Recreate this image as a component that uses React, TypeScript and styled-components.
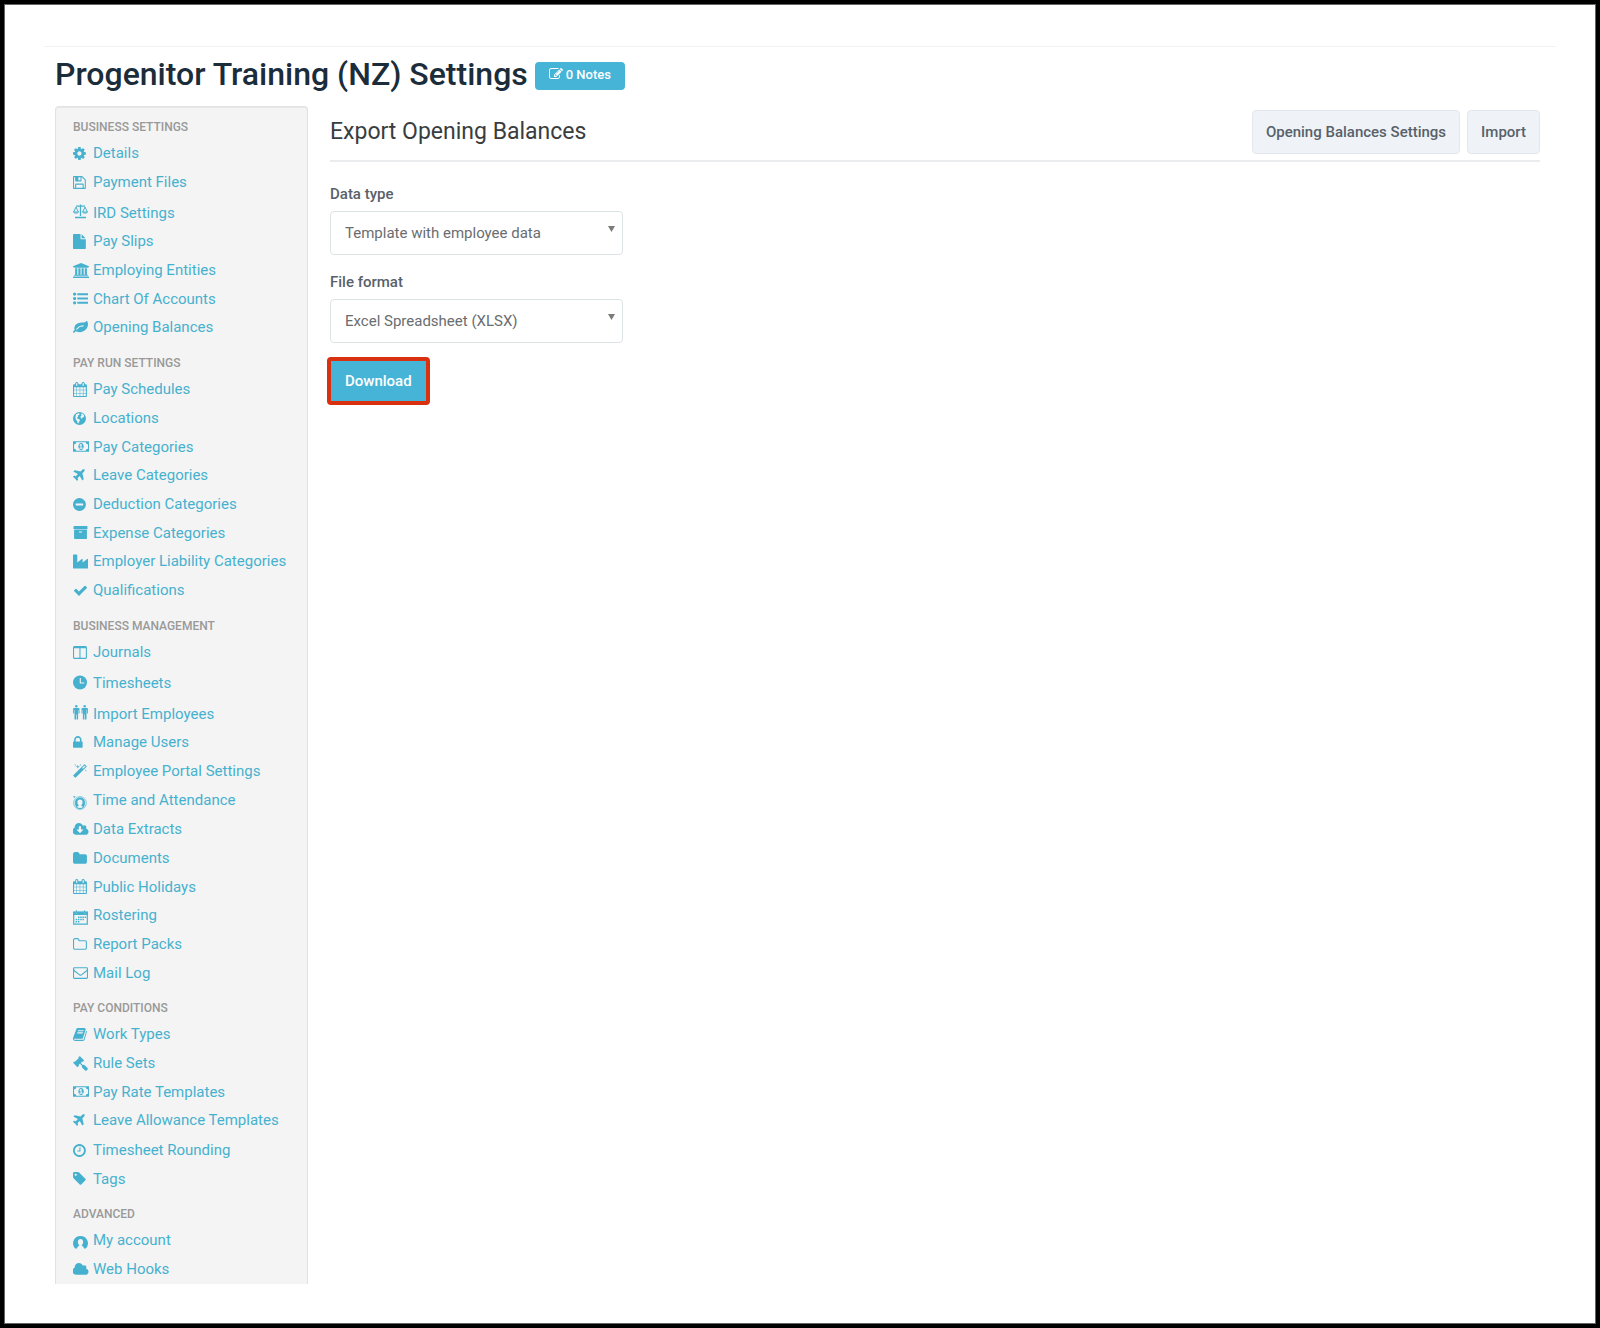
import React from 'react';
import styled, { createGlobalStyle, css } from 'styled-components';

const GlobalStyle = createGlobalStyle`
  *, *::before, *::after { box-sizing: border-box; }
  body {
    margin: 0;
    background: #fff;
    color: #58616a;
    font-family: Roboto, "Liberation Sans", sans-serif;
    font-size: 15px;
    line-height: 20px;
  }
`;

/* ---------- icons ---------- */

type Glyph = { box: string; art: React.ReactNode; low?: boolean; high?: boolean };

const solid = (box: string, d: string): Glyph => ({ box, art: <path d={d} /> });

const CALENDAR =
  'M192 1664h288v-288h-288v288zm352 0h320v-288h-320v288zm-352-352h288v-320h-288v320zm352 0h320v-320h-320v320zm-352-384h288v-288h-288v288zm736 736h320v-288h-320v288zm-384-736h320v-288h-320v288zm768 736h288v-288h-288v288zm-384-352h320v-320h-320v320zm-352-864v-288q0-13-9.5-22.5t-22.5-9.5h-64q-13 0-22.5 9.5t-9.5 22.5v288q0 13 9.5 22.5t22.5 9.5h64q13 0 22.5-9.5t9.5-22.5zm736 864h288v-320h-288v320zm-384-384h320v-288h-320v288zm384 0h288v-288h-288v288zm32-480v-288q0-13-9.5-22.5t-22.5-9.5h-64q-13 0-22.5 9.5t-9.5 22.5v288q0 13 9.5 22.5t22.5 9.5h64q13 0 22.5-9.5t9.5-22.5zm384-64v1280q0 52-38 90t-90 38h-1408q-52 0-90-38t-38-90v-1280q0-52 38-90t90-38h128v-96q0-66 47-113t113-47h64q66 0 113 47t47 113v96h384v-96q0-66 47-113t113-47h64q66 0 113 47t47 113v96h128q52 0 90 38t38 90z';

const glyphs = {
  cog: solid('128 0 1536 1792', 'M1152 896q0-106-75-181t-181-75-181 75-75 181 75 181 181 75 181-75 75-181zm512-109v222q0 12-8 23t-20 13l-185 28q-19 54-39 91 35 50 107 138 10 12 10 25t-9 23q-27 37-99 108t-94 71q-12 0-26-9l-138-108q-44 23-91 38-16 136-29 186-7 28-36 28h-222q-14 0-24.5-8.5t-11.5-21.5l-28-184q-49-16-90-37l-141 107q-10 9-25 9-14 0-25-11-126-114-165-168-7-10-7-23 0-12 8-23 15-21 51-66.5t54-70.5q-27-50-41-99l-183-27q-13-2-21-12.5t-8-23.5v-222q0-12 8-23t19-13l186-28q14-46 39-92-40-57-107-138-10-12-10-24 0-10 9-23 26-36 98.5-107.5t94.5-71.5q13 0 26 10l138 107q44-23 91-38 16-136 29-186 7-28 36-28h222q14 0 24.5 8.5t11.5 21.5l28 184q49 16 90 37l142-107q9-9 24-9 13 0 25 10 129 119 165 170 7 8 7 22 0 12-8 23-15 21-51 66.5t-54 70.5q26 50 41 98l183 28q13 2 21 12.5t8 23.5z'),
  save: solid('128 0 1536 1792', 'M512 1536h768v-384h-768v384zm896 0h128v-896q0-14-10-38.5t-20-34.5l-281-281q-10-10-34-20t-39-10v416q0 40-28 68t-68 28h-576q-40 0-68-28t-28-68v-416h-128v1280h128v-416q0-40 28-68t68-28h832q40 0 68 28t28 68v416zm-384-928v-320q0-13-9.5-22.5t-22.5-9.5h-192q-13 0-22.5 9.5t-9.5 22.5v320q0 13 9.5 22.5t22.5 9.5h192q13 0 22.5-9.5t9.5-22.5zm640 32v928q0 40-28 68t-68 28h-1344q-40 0-68-28t-28-68v-1344q0-40 28-68t68-28h928q40 0 88 20t76 48l280 280q28 28 48 76t20 88z'),
  scales: {
    box: '0 0 15 15',
    high: true,
    art: (
      <g fill="none" stroke="currentColor" strokeWidth="1">
        <path d="M7.5 .4V12M3 2.2h9M2 13.5h11" strokeWidth="1.3" />
        <path d="M.7 8 3 3l2.300 5M9.700 8 12 3l2.300 5" />
        <path d="M.4 8h5.200c-.3 1.500-4.900 1.500-5.200 0ZM9.400 8h5.200c-.3 1.500-4.900 1.500-5.200 0Z" />
      </g>
    ),
  },
  file: solid('128 0 1536 1792', 'M1152 512v-472q22 14 36 28l408 408q14 14 28 36h-472zm-128 32q0 40 28 68t68 28h544v1056q0 40-28 68t-68 28h-1344q-40 0-68-28t-28-68v-1600q0-40 28-68t68-28h800v544z'),
  bank: solid('0 0 1920 1792', 'M960 0l960 384v128h-128q0 26-20.5 45t-48.5 19h-1526q-28 0-48.5-19t-20.5-45h-128v-128zm-704 640h256v768h128v-768h256v768h128v-768h256v768h128v-768h256v768h59q28 0 48.5 19t20.5 45v64h-1664v-64q0-26 20.5-45t48.5-19h59v-768zm1595 960q28 0 48.5 19t20.5 45v128h-1920v-128q0-26 20.5-45t48.5-19h1782z'),
  list: solid('0 0 1792 1792', 'M384 1408q0 80-56 136t-136 56-136-56-56-136 56-136 136-56 136 56 56 136zm0-512q0 80-56 136t-136 56-136-56-56-136 56-136 136-56 136 56 56 136zm1408 416v192q0 13-9.5 22.5t-22.5 9.5h-1216q-13 0-22.5-9.5t-9.5-22.5v-192q0-13 9.5-22.5t22.5-9.5h1216q13 0 22.5 9.5t9.5 22.5zm-1408-928q0 80-56 136t-136 56-136-56-56-136 56-136 136-56 136 56 56 136zm1408 416v192q0 13-9.5 22.5t-22.5 9.5h-1216q-13 0-22.5-9.5t-9.5-22.5v-192q0-13 9.5-22.5t22.5-9.5h1216q13 0 22.5 9.5t9.5 22.5zm0-512v192q0 13-9.5 22.5t-22.5 9.5h-1216q-13 0-22.5-9.5t-9.5-22.5v-192q0-13 9.5-22.5t22.5-9.5h1216q13 0 22.5 9.5t9.5 22.5z'),
  leaf: solid('0 0 1792 1792', 'M1280 704q0-26-19-45t-45-19q-172 0-318 49.5t-259.5 134-235.5 219.5q-19 21-19 45 0 26 19 45t45 19q24 0 45-19 27-24 74-71t67-66q137-124 268.5-176t313.5-52q26 0 45-19t19-45zm512-198q0 95-20 193-46 224-184.5 383t-357.5 268q-214 108-438 108-148 0-286-47-15-5-88-42t-96-37q-16 0-39.5 32t-45 70-52.5 70-60 32q-43 0-63.5-17.5t-45.5-59.5q-2-4-6-11t-5.5-10-3-9.5-1.5-13.5q0-35 31-73.5t68-65.5 68-56 31-48q0-4-14-38t-16-44q-9-51-9-104 0-115 43.5-220t119-184.5 170.5-139 204-95.5q55-18 145-25.5t179.5-9 178.5-6 163.5-24 113.5-56.5l29.5-29.5 29.5-28 27-20 36.5-16 43.5-4.5q39 0 70.5 46t47.5 112 24 124 8 96z'),
  calendar: solid('64 0 1664 1792', CALENDAR),
  globe: {
    box: '0 0 13 15',
    art: (
      <>
        <circle cx="6.500" cy="7.500" r="6.500" />
        <g fill="#f4f4f4">
          <path d="M3 3.200 5.500 2.200l1.200.6-.6 1.300-1.300.5.3 1.100-1.300 1.200.9.9 1.700.4.5 1.300-1 1.400-.3 1.700-1-.6-.5-2.100-1.300-1.300-.4-2.100Z" />
          <path d="M8.300 2.300 10 3.100l1 1.500-.3 1.600-1.200.4-.6 1.100-1.200-1-.2-1.500 1-.8Z" />
        </g>
      </>
    ),
  },
  money: solid('0 0 1920 1792', 'M768 1152h384v-96h-128v-448h-114l-148 137 77 80q42-37 55-57h2v288h-128v96zm512-256q0 70-21 142t-59.5 134-101.5 101-138 39-138-39-101.5-101-59.5-134-21-142 21-142 59.5-134 101.5-101 138-39 138 39 101.5 101 59.5 134 21 142zm512 256v-512q-106 0-181-75t-75-181h-1152q0 106-75 181t-181 75v512q106 0 181 75t75 181h1152q0-106 75-181t181-75zm128-832v1152q0 26-19 45t-45 19h-1792q-26 0-45-19t-19-45v-1152q0-26 19-45t45-19h1792q26 0 45 19t19 45z'),
  plane: solid('192 0 1408 1792', 'M1568 160q44 52 12 148t-108 172l-161 161 160 696q5 19-12 33l-128 96q-7 6-19 6-4 0-7-1-15-3-21-16l-279-508-259 259 53 194q5 17-8 31l-96 96q-9 9-23 9h-2q-15-2-24-13l-189-252-252-189q-11-7-13-23-1-13 9-25l96-97q9-9 23-9 6 0 8 1l194 53 259-259-508-279q-14-8-17-24-2-16 9-27l128-128q14-13 30-8l665 159 160-160q76-76 172-108t148 12z'),
  minus: solid('128 0 1536 1792', 'M1344 960v-128q0-26-19-45t-45-19h-768q-26 0-45 19t-19 45v128q0 26 19 45t45 19h768q26 0 45-19t19-45zm320-64q0 209-103 385.5t-279.5 279.5-385.5 103-385.5-103-279.5-279.5-103-385.5 103-385.5 279.5-279.5 385.5-103 385.5 103 279.5 279.5 103 385.5z'),
  archive: solid('0 0 1792 1792', 'M1088 832q0-26-19-45t-45-19h-256q-26 0-45 19t-19 45 19 45 45 19h256q26 0 45-19t19-45zm576-192v960q0 26-19 45t-45 19h-1408q-26 0-45-19t-19-45v-960q0-26 19-45t45-19h1408q26 0 45 19t19 45zm64-448v256q0 26-19 45t-45 19h-1536q-26 0-45-19t-19-45v-256q0-26 19-45t45-19h1536q26 0 45 19t19 45z'),
  industry: solid('0 0 1792 1792', 'M448 64q26 0 45 19t19 45v891l536-429q17-14 40-14 26 0 45 19t19 45v379l536-429q17-14 40-14 26 0 45 19t19 45v1024q0 26-19 45t-45 19h-1664q-26 0-45-19t-19-45v-1536q0-26 19-45t45-19h384z'),
  check: solid('0 0 1792 1792', 'M1671 566q0 40-28 68l-724 724-136 136q-28 28-68 28t-68-28l-136-136-362-362q-28-28-28-68t28-68l136-136q28-28 68-28t68 28l294 295 656-657q28-28 68-28t68 28l136 136q28 28 28 68z'),
  columns: solid('64 0 1664 1792', 'M224 1536h608v-1152h-640v1120q0 13 9.5 22.5t22.500 9.500zm1376-32v-1120h-640v1152h608q13 0 22.500-9.500t9.500-22.500zm128-1216v1216q0 66-47 113t-113 47h-1344q-66 0-113-47t-47-113v-1216q0-66 47-113t113-47h1344q66 0 113 47t47 113z'),
  clock: {
    box: '0 0 14 15',
    high: true,
    art: (
      <>
        <circle cx="7" cy="7.500" r="7" />
        <path d="M7.300 3v5h4" fill="none" stroke="#f4f4f4" strokeWidth="1.100" />
      </>
    ),
  },
  people: {
    box: '0 0 15 15',
    high: true,
    art: (
      <>
        <circle cx="3.300" cy="1.300" r="1.200" />
        <path d="M.9 3h4.800q.8 0 .8.900V8.500h-1V5h-.4V14.600H3.600V9.500H3V14.600H1.500V5h-.4V8.500H.1V3.900Q.1 3 .9 3Z" />
        <circle cx="11.700" cy="1.300" r="1.200" />
        <path d="M9.300 3h4.800q.8 0 .8.900V8.500h-1V5h-.4V14.600H12V9.500h-.6V14.600H9.900V5h-.4V8.500h-1V3.900Q8.500 3 9.300 3Z" />
      </>
    ),
  },
  lock: solid('320 0 1152 1792', 'M640 768h512v-192q0-106-75-181t-181-75-181 75-75 181v192zm832 96v576q0 40-28 68t-68 28h-960q-40 0-68-28t-28-68v-576q0-40 28-68t68-28h32v-192q0-184 132-316t316-132 316 132 132 316v192h32q40 0 68 28t28 68z'),
  wand: solid('64 0 1664 1792', 'M1254 581l293-293-107-107-293 293zm447-293q0 27-18 45l-1286 1286q-18 18-45 18t-45-18l-198-198q-18-18-18-45t18-45l1286-1286q18-18 45-18t45 18l198 198q18 18 18 45zm-1351-190l98 30-98 30-30 98-30-98-98-30 98-30 30-98zm350 162l196 60-196 60-60 196-60-196-196-60 196-60 60-196zm930 478l98 30-98 30-30 98-30-98-98-30 98-30 30-98zm-640-640l98 30-98 30-30 98-30-98-98-30 98-30 30-98z'),
  attendance: {
    box: '0 0 14 15',
    low: true,
    art: (
      <>
        <circle cx="7" cy="8" r="6.300" fill="none" stroke="currentColor" strokeWidth=".9" opacity=".8" />
        <path
          fillRule="evenodd"
          d="M7 2.500c3 0 5 2.300 5 5.300 0 2-.6 3.600-1.500 4.700Q9 14 7 14t-3.500-1.500C2.600 11.400 2 9.800 2 7.800c0-3 2-5.300 5-5.300ZM7 4.400C5.300 4.400 4.400 5.700 4.400 7.300c0 1.200.5 2.200 1.200 2.800v.9l-1.700.8q1.300 1.200 3.100 1.200t3.100-1.200L8.400 11v-.9c.7-.6 1.200-1.600 1.200-2.800 0-1.600-.9-2.900-2.600-2.900Z"
        />
        <path d="M0 1.200h2.600L1.300 3.200Z" />
      </>
    ),
  },
  cloudDown: solid('0 0 1920 1792', 'M1216 928q0-14-9-23t-23-9h-224v-352q0-13-9.5-22.5t-22.5-9.5h-192q-13 0-22.5 9.5t-9.5 22.5v352h-224q-13 0-22.5 9.5t-9.5 22.5q0 14 9 23l352 352q9 9 23 9t23-9l351-351q10-12 10-24zm640 224q0 159-112.5 271.5t-271.5 112.5h-1088q-185 0-316.5-131.5t-131.500-316.500q0-130 70-240t188-165q-2-30-2-43 0-212 150-362t362-150q156 0 285.500 87t188.500 231q71-62 166-62 106 0 181 75t75 181q0 76-41 138 130 31 213.500 135.500t83.500 238.500z'),
  folder: solid('64 0 1664 1792', 'M1728 608v704q0 92-66 158t-158 66h-1216q-92 0-158-66t-66-158v-960q0-92 66-158t158-66h320q92 0 158 66t66 158v32h672q92 0 158 66t66 158z'),
  roster: {
    box: '0 0 15 15',
    low: true,
    art: (
      <>
        <path d="M.7 2.200h13.600v12H.7Z" fill="none" stroke="currentColor" strokeWidth="1.200" />
        <path d="M.2 1.700h2.500v1.500h1.500V1.700h6.600v1.500h1.500V1.700h2.500V5H.2ZM2.900.3h1v2.400h-1ZM11.100.3h1v2.400h-1Z" />
        <path d="M5 6.500h1.500V8H5ZM7.200 6.500h1.500V8H7.200ZM9.400 6.500h1.500V8H9.400ZM11.600 6.500h1.500V8h-1.500ZM2.600 8.800h1.500v1.500H2.600ZM4.900 8.800h1.500v1.500H4.900ZM7.200 8.800h1.500v1.500H7.200ZM9.400 8.800h1.500v1.500H9.400ZM2.600 11.100h1.500v1.500H2.600ZM4.900 11.100h1.500v1.500H4.900Z" />
      </>
    ),
  } as Glyph,
  folderOpen: solid('64 0 1664 1792', 'M1600 1312v-704q0-40-28-68t-68-28h-704q-40 0-68-28t-28-68v-64q0-40-28-68t-68-28h-320q-40 0-68 28t-28 68v960q0 40 28 68t68 28h1216q40 0 68-28t28-68zm128-704v704q0 92-66 158t-158 66h-1216q-92 0-158-66t-66-158v-960q0-92 66-158t158-66h320q92 0 158 66t66 158v32h672q92 0 158 66t66 158z'),
  mail: solid('0 0 1792 1792', 'M1664 1504v-768q-32 36-69 66-268 206-426 338-51 43-83 67t-86.5 48.5-102.5 24.5h-2q-48 0-102.500-24.500t-86.500-48.500-83-67q-158-132-426-338-37-30-69-66v768q0 13 9.500 22.500t22.500 9.500h1472q13 0 22.500-9.500t9.500-22.500zm0-1051v-24.500l-.5-13-3-12.500-5.500-9-9-7.500-14-2.500h-1472q-13 0-22.500 9.500t-9.500 22.500q0 168 147 284 193 152 401 317 6 5 35 29.500t46 37.500 44.500 31.500 50.500 27.500 43 9h2q20 0 43-9t50.500-27.500 44.500-31.500 46-37.500 35-29.500q208-165 401-317 54-43 100.500-115.500t46.500-131.500zm128-37v1088q0 66-47 113t-113 47h-1472q-66 0-113-47t-47-113v-1088q0-66 47-113t113-47h1472q66 0 113 47t47 113z'),
  book: solid('64 0 1664 1792', 'M1703 478q40 57 18 129l-275 906q-19 64-76.500 107.500t-122.500 43.500h-923q-77 0-148.500-53.500t-99.500-131.500q-24-67-2-127 0-4 3-27t4-37q1-8-3-21.500t-3-19.500q2-11 8-21t16.500-23.500 16.500-23.500q23-38 45-91.500t30-91.500q3-10 .5-30t-.5-28q3-11 17-28t17-23q21-36 42-92t25-90q1-9-2.500-32t.5-28q4-13 22-30.500t22-22.500q19-26 42.500-84.500t27.500-96.500q1-8-3-25.500t-2-26.500q2-8 9-18t18-23 17-21q8-12 16.500-30.500t15-35 16-36 19.500-32 26.500-23.500 36-11.500 47.500 5.500l-1 3q38-9 51-9h761q74 0 114 56t18 130l-274 906q-36 119-71.500 153.500t-128.500 34.500h-869q-27 0-38 15-11 16-1 43 24 70 144 70h923q29 0 56-15.500t35-41.500l300-987q7-22 5-57 38 15 59 43zm-1064 2q-4 13 2 22.500t20 9.500h608q13 0 25.500-9.500t16.500-22.500l21-64q4-13-2-22.500t-20-9.500h-608q-13 0-25.500 9.500t-16.500 22.500zm-83 256q-4 13 2 22.500t20 9.500h608q13 0 25.500-9.500t16.500-22.500l21-64q4-13-2-22.500t-20-9.500h-608q-13 0-25.500 9.500t-16.500 22.500z'),
  gavel: solid('0 0 1792 1792', 'M1771 1536q0 53-37 90l-107 108q-39 37-91 37-53 0-90-37l-363-364q-38-36-38-90 0-53 43-96l-256-256-126 126q-14 14-34 14t-34-14q2 2 12.500 12t12.500 13 10 11.500 10 13.500 6 13.500 5.500 16.500 1.500 18q0 38-28 68-3 3-16.500 18t-19 20.500-18.500 16.500-22 15.500-22 9-26 4.500q-40 0-68-28l-408-408q-28-28-28-68 0-13 4.500-26t9-22 15.500-22 16.500-18.500 20.500-19 18-16.500q30-28 68-28 10 0 18 1.500t16.500 5.500 13.500 6 13.500 10 11.500 10 13 12.500 12 12.500q-14-14-14-34t14-34l348-348q14-14 34-14t34 14q-2-2-12.500-12t-12.500-13-10-11.500-10-13.500-6-13.500-5.500-16.500-1.500-18q0-38 28-68 3-3 16.500-18t19-20.500 18.500-16.500 22-15.500 22-9 26-4.500q40 0 68 28l408 408q28 28 28 68 0 13-4.500 26t-9 22-15.500 22-16.500 18.500-20.500 19-18 16.500q-30 28-68 28-10 0-18-1.500t-16.500-5.500-13.500-6-13.500-10-11.500-10-13-12.500-12-12.500q14 14 14 34t-14 34l-126 126 256 256q43-43 96-43 52 0 91 37l363 363q37 39 37 91z'),
  clockOutline: solid('128 0 1536 1792', 'M1024 544v448q0 14-9 23t-23 9h-320q-14 0-23-9t-9-23v-64q0-14 9-23t23-9h224v-352q0-14 9-23t23-9h64q14 0 23 9t9 23zm416 352q0-148-73-273t-198-198-273-73-273 73-198 198-73 273 73 273 198 198 273 73 273-73 198-198 73-273zm224 0q0 209-103 385.5t-279.5 279.5-385.5 103-385.5-103-279.5-279.5-103-385.5 103-385.5 279.5-279.5 385.5-103 385.5 103 279.5 279.5 103 385.5z'),
  tag: solid('128 0 1536 1792', 'M576 448q0-53-37.5-90.5t-90.5-37.5-90.5 37.5-37.5 90.5 37.5 90.5 90.5 37.5 90.5-37.5 37.5-90.5zm1067 576q0 53-37 90l-491 492q-39 37-91 37-53 0-90-37l-715-716q-38-37-64.5-101t-26.5-117v-416q0-52 38-90t90-38h416q53 0 117 26.5t102 64.5l715 714q37 39 37 91z'),
  account: {
    box: '0 0 15 15',
    low: true,
    art: (
      <path
        fillRule="evenodd"
        d="M7.500.9a7.400 7.400 0 0 1 5.800 12q-.5.600-1.300.6h-1.100q0-1.700-1.600-2.400l-.5-.3v-.9c.8-.6 1.300-1.500 1.300-2.700 0-2-1-3.200-2.600-3.200S4.900 5.200 4.900 7.200c0 1.200.5 2.100 1.300 2.700v.9l-.5.3q-1.600.7-1.600 2.400H3q-.8 0-1.300-.6A7.400 7.400 0 0 1 7.500.9Z"
      />
    ),
  } as Glyph,
  cloud: solid('0 0 1920 1792', 'M1856 1152q0 159-112.500 271.500t-271.500 112.500h-1088q-185 0-316.500-131.500t-131.500-316.500q0-130 70-240t188-165q-2-30-2-43 0-212 150-362t362-150q156 0 285.500 87t188.500 231q71-62 166-62 106 0 181 75t75 181q0 76-41 138 130 31 213.500 135.500t83.500 238.500z'),
  edit: solid('0 0 1792 1792', 'M888 1184l116-116-152-152-116 116v56h96v96h56zm440-720q-16-16-33 1l-350 350q-17 17-1 33t33-1l350-350q17-17 1-33zm80 594v190q0 119-84.5 203.5t-203.5 84.5h-832q-119 0-203.500-84.500t-84.500-203.500v-832q0-119 84.500-203.500t203.500-84.500h832q63 0 117 25 15 7 18 23 3 17-9 29l-49 49q-14 14-32 8-23-6-45-6h-832q-66 0-113 47t-47 113v832q0 66 47 113t113 47h832q66 0 113-47t47-113v-126q0-13 9-22l64-64q15-15 35-7t20 29zm-96-738l288 288-672 672h-288v-288zm444 132l-92 92-288-288 92-92q28-28 68-28t68 28l152 152q28 28 28 68t-28 68z'),
} satisfies Record<string, Glyph>;

type IconName = keyof typeof glyphs;

const IconSvg = styled.svg`
  display: block;
  height: 15px;
  fill: currentColor;
`;

const SmallIconSvg = styled(IconSvg)`
  height: 14px;
`;

/* ---------- page ---------- */

const Frame = styled.div`
  min-height: 100vh;
  padding: 42px 40px 32px;
  border: 4px solid #000;
  box-shadow: inset 0 0 0 1px #666;
`;

const Page = styled.div`
  padding: 0 16px 0 11px;
  border-top: 1px solid #f2f2f3;
`;

const Header = styled.header`
  display: flex;
  align-items: center;
  gap: 7px;
  height: 59px;
  padding-bottom: 4px;
`;

const PageTitle = styled.h1`
  margin: 0;
  color: #1b2c3a;
  font-size: 32px;
  font-weight: 500;
  line-height: 55px;
`;

const buttonBase = css`
  border: 1px solid transparent;
  border-radius: 4px;
  font-family: inherit;
  font-weight: 500;
  cursor: pointer;
`;

const NotesButton = styled.button`
  ${buttonBase}
  display: flex;
  align-items: center;
  gap: 3px;
  height: 28px;
  margin-top: 2px;
  padding: 0 13px 3px;
  background: #46b4d7;
  color: #fff;
  font-size: 13px;
`;

const Columns = styled.div`
  display: flex;
  align-items: flex-start;
  gap: 22px;
`;

const Sidebar = styled.nav`
  flex: 0 0 253px;
  padding: 9px 16px 0 17px;
  border: 1px solid #e2e2e3;
  border-bottom: 0;
  border-radius: 4px 4px 0 0;
  background: #f4f4f4;
  box-shadow: inset 0 1px 1px #e6e6e6;
`;

const Group = styled.section`
  & + & {
    margin-top: 10px;
  }
`;

const GroupTitle = styled.h2`
  margin: 0;
  padding-bottom: 1px;
  color: #999;
  font-size: 12px;
  font-weight: 500;
  line-height: 22px;
  text-transform: uppercase;
`;

const Links = styled.ul`
  margin: 0;
  padding: 0;
  list-style: none;
`;

const LinkItem = styled.li<{ $lead: number }>`
  padding-top: ${({ $lead }) => $lead}px;
  line-height: 29px;

  &:nth-child(3n) {
    line-height: 28px;
  }
`;

const NavLink = styled.a`
  display: flex;
  align-items: center;
  color: #46b1cf;
  text-decoration: none;
  white-space: nowrap;

  &:hover {
    text-decoration: underline;
  }
`;

const IconSlot = styled.span<{ $low?: boolean; $high?: boolean }>`
  flex: 0 0 20px;
  padding-top: ${({ $low }) => ($low ? '4px' : '0')};
  padding-bottom: ${({ $low, $high }) => ($high ? '3px' : $low ? '0' : '1px')};
`;

const Main = styled.main`
  flex: 1;
  min-width: 0;
  padding-top: 4px;
`;

const Toolbar = styled.div`
  display: flex;
  align-items: center;
  justify-content: space-between;
  padding-bottom: 6px;
  border-bottom: 2px solid #ebecee;
`;

const SectionTitle = styled.h2`
  margin: 0;
  color: #3a3d40;
  font-size: 23px;
  font-weight: 400;
  line-height: 30px;
`;

const Actions = styled.div`
  display: flex;
  gap: 7px;
`;

const SecondaryButton = styled.button`
  ${buttonBase}
  height: 44px;
  padding: 0 13px;
  border-color: #e3e7eb;
  background: #eff3f7;
  color: #58616a;
  font-size: 15px;
`;

const Form = styled.form`
  display: flex;
  flex-direction: column;
  align-items: flex-start;
  padding-top: 22px;
`;

const Field = styled.div`
  display: flex;
  flex-direction: column;
  gap: 7px;
  width: 293px;
  max-width: 100%;
  margin-bottom: 17px;
`;

const Label = styled.label`
  color: #58616a;
  font-weight: 500;
`;

const SelectBox = styled.div`
  display: grid;
  align-items: center;
`;

const Select = styled.select`
  grid-area: 1 / 1;
  appearance: none;
  width: 100%;
  height: 44px;
  padding: 0 32px 0 14px;
  border: 1px solid #dde4e6;
  border-radius: 4px;
  background: #fff;
  color: #6a6d70;
  font-family: inherit;
  font-size: 15px;
`;

const Arrow = styled.svg`
  grid-area: 1 / 1;
  justify-self: end;
  width: 7px;
  height: 6px;
  margin: 0 8px 9px 0;
  fill: #7b7b7b;
  pointer-events: none;
`;

const PrimaryButton = styled.button`
  ${buttonBase}
  height: 42px;
  padding: 0 15px;
  border: 0;
  border-radius: 1px;
  outline: 4px solid #d9300f;
  outline-offset: -1px;
  background: #46b4d7;
  color: #fff;
  font-size: 15px;
`;

function Icon({ name }: { name: IconName }) {
  const glyph: Glyph = glyphs[name];
  return (
    <IconSvg viewBox={glyph.box} aria-hidden="true">
      {glyph.art}
    </IconSvg>
  );
}

type Item = { label: string; icon: IconName; lead?: number };

const groups: { title: string; items: Item[] }[] = [
  {
    title: 'Business Settings',
    items: [
      { label: 'Details', icon: 'cog' },
      { label: 'Payment Files', icon: 'save' },
      { label: 'IRD Settings', icon: 'scales', lead: 2 },
      { label: 'Pay Slips', icon: 'file' },
      { label: 'Employing Entities', icon: 'bank' },
      { label: 'Chart Of Accounts', icon: 'list' },
      { label: 'Opening Balances', icon: 'leaf' },
    ],
  },
  {
    title: 'Pay Run Settings',
    items: [
      { label: 'Pay Schedules', icon: 'calendar' },
      { label: 'Locations', icon: 'globe' },
      { label: 'Pay Categories', icon: 'money' },
      { label: 'Leave Categories', icon: 'plane' },
      { label: 'Deduction Categories', icon: 'minus' },
      { label: 'Expense Categories', icon: 'archive' },
      { label: 'Employer Liability Categories', icon: 'industry' },
      { label: 'Qualifications', icon: 'check' },
    ],
  },
  {
    title: 'Business Management',
    items: [
      { label: 'Journals', icon: 'columns' },
      { label: 'Timesheets', icon: 'clock', lead: 2 },
      { label: 'Import Employees', icon: 'people', lead: 2 },
      { label: 'Manage Users', icon: 'lock' },
      { label: 'Employee Portal Settings', icon: 'wand' },
      { label: 'Time and Attendance', icon: 'attendance' },
      { label: 'Data Extracts', icon: 'cloudDown', lead: 1 },
      { label: 'Documents', icon: 'folder' },
      { label: 'Public Holidays', icon: 'calendar' },
      { label: 'Rostering', icon: 'roster' },
      { label: 'Report Packs', icon: 'folderOpen' },
      { label: 'Mail Log', icon: 'mail' },
    ],
  },
  {
    title: 'Pay Conditions',
    items: [
      { label: 'Work Types', icon: 'book' },
      { label: 'Rule Sets', icon: 'gavel' },
      { label: 'Pay Rate Templates', icon: 'money' },
      { label: 'Leave Allowance Templates', icon: 'plane' },
      { label: 'Timesheet Rounding', icon: 'clockOutline', lead: 1 },
      { label: 'Tags', icon: 'tag' },
    ],
  },
  {
    title: 'Advanced',
    items: [
      { label: 'My account', icon: 'account' },
      { label: 'Web Hooks', icon: 'cloud' },
    ],
  },
];

function NavItem({ label, icon, lead = 0 }: Item) {
  const { low, high }: Glyph = glyphs[icon];
  return (
    <LinkItem $lead={lead}>
      <NavLink href="#">
        <IconSlot $low={low} $high={high}>
          <Icon name={icon} />
        </IconSlot>
        {label}
      </NavLink>
    </LinkItem>
  );
}

function SelectField({ id, label, options }: { id: string; label: string; options: string[] }) {
  return (
    <Field>
      <Label htmlFor={id}>{label}</Label>
      <SelectBox>
        <Select id={id}>
          {options.map((option) => (
            <option key={option}>{option}</option>
          ))}
        </Select>
        <Arrow viewBox="0 0 7 6" aria-hidden="true">
          <path d="M0 0h7L3.500 6Z" />
        </Arrow>
      </SelectBox>
    </Field>
  );
}

export default function App() {
  return (
    <Frame>
      <GlobalStyle />
      <Page>
        <Header>
          <PageTitle>Progenitor Training (NZ) Settings</PageTitle>
          <NotesButton type="button">
            <SmallIconSvg viewBox={glyphs.edit.box} aria-hidden="true">
              {glyphs.edit.art}
            </SmallIconSvg>
            0 Notes
          </NotesButton>
        </Header>
        <Columns>
          <Sidebar aria-label="Settings">
            {groups.map((group) => (
              <Group key={group.title}>
                <GroupTitle>{group.title}</GroupTitle>
                <Links>
                  {group.items.map((item) => (
                    <NavItem key={item.label} {...item} />
                  ))}
                </Links>
              </Group>
            ))}
          </Sidebar>
          <Main>
            <Toolbar>
              <SectionTitle>Export Opening Balances</SectionTitle>
              <Actions>
                <SecondaryButton type="button">Opening Balances Settings</SecondaryButton>
                <SecondaryButton type="button">Import</SecondaryButton>
              </Actions>
            </Toolbar>
            <Form onSubmit={(event) => event.preventDefault()}>
              <SelectField id="data-type" label="Data type" options={['Template with employee data']} />
              <SelectField id="file-format" label="File format" options={['Excel Spreadsheet (XLSX)']} />
              <PrimaryButton type="submit">Download</PrimaryButton>
            </Form>
          </Main>
        </Columns>
      </Page>
    </Frame>
  );
}
